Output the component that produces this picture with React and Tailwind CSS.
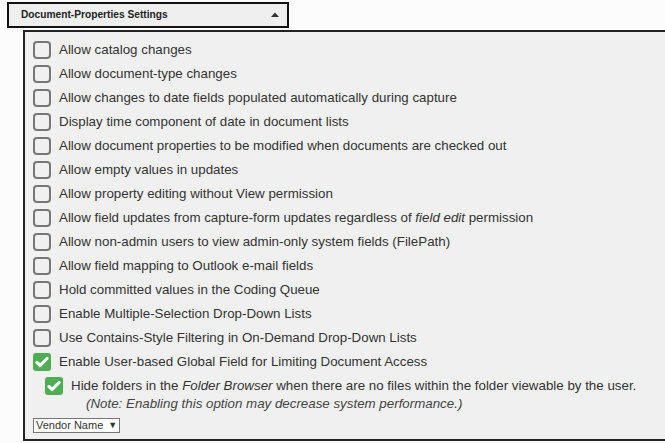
import React from 'react';

const items = [
  'Allow catalog changes',
  'Allow document-type changes',
  'Allow changes to date fields populated automatically during capture',
  'Display time component of date in document lists',
  'Allow document properties to be modified when documents are checked out',
  'Allow empty values in updates',
  'Allow property editing without View permission',
  <>Allow field updates from capture-form updates regardless of <i>field edit</i> permission</>,
  'Allow non-admin users to view admin-only system fields (FilePath)',
  'Allow field mapping to Outlook e-mail fields',
  'Hold committed values in the Coding Queue',
  'Enable Multiple-Selection Drop-Down Lists',
  'Use Contains-Style Filtering in On-Demand Drop-Down Lists',
];

const Box = ({ checked }) =>
  checked ? (
    <span className="w-[18px] h-[18px] rounded-[3px] bg-[#4caf50] flex items-center justify-center shrink-0">
      <svg width="14" height="12" viewBox="0 0 14 12">
        <path d="M2 6.5 L5.2 9.5 L12 2.5" fill="none" stroke="#fff" strokeWidth="3.2" strokeLinecap="round" strokeLinejoin="round" />
      </svg>
    </span>
  ) : (
    <span className="w-[18px] h-[18px] rounded-[4px] border-2 border-[#777] bg-[#f0f0f0] shrink-0" />
  );

const Row = ({ checked, children, className = '' }) => (
  <div className={`flex items-center gap-[8px] h-[24px] ${className}`}>
    <Box checked={checked} />
    <span>{children}</span>
  </div>
);

export default function App() {
  return (
    <div className="h-[443px] overflow-hidden bg-[#fcfcfc] pt-[2px] font-['Liberation_Sans',Arial,sans-serif] text-[#333] text-[13.33px]">
      <div className="ml-[7px] w-[282px] h-[26px] border-2 border-[#111] bg-[#efefef] flex items-center justify-between pl-[12px] pr-[8px]">
        <span className="text-[10.2px] font-bold text-[#222]">Document-Properties Settings</span>
        <svg width="8" height="5" viewBox="0 0 8 5" className="mb-[2px]">
          <path d="M0 5 L4 0.5 L8 5 Z" fill="#333" />
        </svg>
      </div>
      <div className="mt-[2px] ml-[23px] w-[700px] h-[411px] border-2 border-[#222] bg-[#f0f0f0] pl-[8px] pt-[6px]">
        {items.map((t, i) => (
          <Row key={i}>{t}</Row>
        ))}
        <Row checked>Enable User-based Global Field for Limiting Document Access</Row>
        <Row checked className="pl-[12px]">
          Hide folders in the <i>Folder Browser</i> when there are no files within the folder viewable by the user.
        </Row>
        <div className="pl-[53px] h-[15px] leading-[11px] italic text-[#444]">(Note: Enabling this option may decrease system performance.)</div>
        <div className="mt-[5px] inline-flex items-center h-[15px] border border-[#777] bg-white px-[2px] text-[11px] leading-none text-[#333] gap-[5px]">
          <span>Vendor Name</span>
          <span className="text-[9px]">▼</span>
        </div>
      </div>
    </div>
  );
}
